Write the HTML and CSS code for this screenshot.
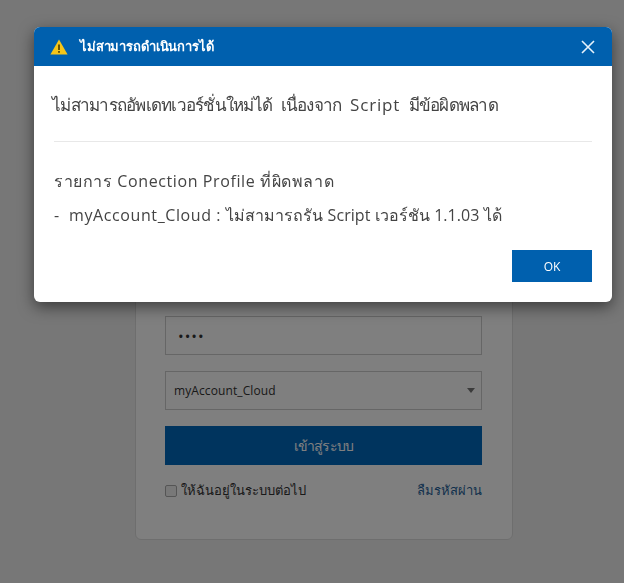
FILE: index.html
```html
<!DOCTYPE html>
<html lang="th">
<head>
  <meta charset="UTF-8">
  <meta name="viewport" content="width=device-width, initial-scale=1.0">
  <title>เข้าสู่ระบบ</title>
  <link rel="stylesheet" href="styles.css">
</head>
<body>
  <div class="login-card">
    <input class="field password-field" type="password" value="1234">
    <div class="field select-field">
      <span>myAccount_Cloud</span>
      <span class="select-arrow"></span>
    </div>
    <button class="login-btn">เข้าสู่ระบบ</button>
    <div class="login-options">
      <label class="remember"><span class="check-box"></span> ให้ฉันอยู่ในระบบต่อไป</label>
      <a class="forgot" href="#">ลืมรหัสผ่าน</a>
    </div>
  </div>

  <div class="backdrop"></div>

  <div class="dialog">
    <div class="dialog-header">
      <svg class="warn-icon" width="18" height="16" viewBox="0 0 18 16">
        <path d="M9 0.5 L17.6 15.5 H0.4 Z" fill="#f5c518"/>
        <rect x="8.1" y="5.5" width="1.8" height="5.5" fill="#5c4a00"/>
        <rect x="8.1" y="12" width="1.8" height="1.8" fill="#5c4a00"/>
      </svg>
      <span class="dialog-title">ไม่สามารถดำเนินการได้</span>
      <svg class="close-icon" width="14" height="14" viewBox="0 0 14 14">
        <path d="M1 1 L13 13 M13 1 L1 13" stroke="#e6f2fb" stroke-width="1.6" fill="none"/>
      </svg>
    </div>
    <div class="dialog-body">
      <p class="dialog-lead">ไม่สามารถอัพเดทเวอร์ชั่นใหม่ได้ เนื่องจาก <span class="lead-latin">Script</span> มีข้อผิดพลาด</p>
      <hr class="dialog-line">
      <p class="dialog-text">รายการ Conection Profile ที่ผิดพลาด</p>
      <p class="dialog-text"><span class="dialog-dash">-</span>myAccount_Cloud : <span class="dialog-tail">ไม่สามารถรัน Script เวอร์ชัน 1.1.03 ได้</span></p>
      <div class="dialog-actions">
        <button class="ok-btn">OK</button>
      </div>
    </div>
  </div>
</body>
</html>
```

FILE: styles.css
```css
* {
  box-sizing: border-box;
  margin: 0;
  padding: 0;
}

html, body {
  height: 100%;
}

body {
  background: #eeeeee;
  font-family: 'Open Sans', 'Noto Sans', sans-serif;
  overflow: hidden;
}

.login-card {
  width: 378px;
  height: 439px;
  margin: 101px 0 0 135px;
  padding: 214px 29px 0;
  background: white;
  border: 1px solid #dddddd;
  border-radius: 6px;
}

.field {
  display: block;
  width: 317px;
  height: 39px;
  padding: 0 8px;
  background: white;
  border: 1px solid #cccccc;
  font-family: inherit;
  font-size: 12px;
  color: #333333;
}

.password-field {
  padding-left: 12px;
  font-size: 15px;
  letter-spacing: 1px;
}

.select-field {
  display: flex;
  align-items: center;
  justify-content: space-between;
  margin-top: 16px;
  padding-right: 6px;
  letter-spacing: 0.1px;
}

.select-arrow {
  width: 0;
  height: 0;
  border-left: 4px solid transparent;
  border-right: 4px solid transparent;
  border-top: 5px solid #777777;
}

.login-btn {
  display: block;
  width: 317px;
  height: 39px;
  margin-top: 16px;
  background: #0068bd;
  color: white;
  border: none;
  font-family: inherit;
  font-size: 14px;
  letter-spacing: -0.9px;
}

.login-options {
  display: flex;
  justify-content: space-between;
  align-items: center;
  margin-top: 15px;
  width: 317px;
  font-size: 13px;
  color: #333333;
}

.remember {
  display: flex;
  align-items: center;
  gap: 4px;
}

.check-box {
  width: 12px;
  height: 12px;
  background: #f0f0f0;
  border: 1px solid #aaaaaa;
  border-radius: 2px;
}

.forgot {
  color: #1f5f99;
  text-decoration: none;
}

.backdrop {
  position: fixed;
  inset: 0;
  background: rgba(0, 0, 0, 0.5);
}

.dialog {
  position: absolute;
  left: 34px;
  top: 27px;
  width: 578px;
  height: 275px;
  background: white;
  border-radius: 6px;
  box-shadow: 0 5px 15px rgba(0, 0, 0, 0.5);
  overflow: hidden;
}

.dialog-header {
  display: flex;
  align-items: center;
  height: 39px;
  padding: 0 17px 0 16px;
  background: #0060ae;
}

.dialog-title {
  flex: 1;
  margin-left: 12px;
  color: white;
  font-size: 13px;
  font-weight: bold;
  letter-spacing: -0.15px;
}

.dialog-body {
  padding: 25px 20px 0;
}

.dialog-lead {
  margin-left: -2px;
  font-size: 17px;
  line-height: 28px;
  letter-spacing: -0.75px;
  word-spacing: 5px;
  color: #444444;
}

.lead-latin {
  letter-spacing: 0.8px;
}

.dialog-line {
  margin-top: 22px;
  border: none;
  border-top: 1px solid #e8e8e8;
}

.dialog-text {
  margin-top: 10px;
  font-size: 16px;
  line-height: 24px;
  letter-spacing: 0.6px;
  color: #444444;
}

.dialog-line + .dialog-text {
  margin-top: 27px;
}

.dialog-dash {
  display: inline-block;
  width: 15px;
}

.dialog-tail {
  letter-spacing: 0.05px;
}

.dialog-actions {
  display: flex;
  justify-content: flex-end;
  margin-top: 23px;
}

.ok-btn {
  width: 80px;
  height: 32px;
  background: #0060ae;
  color: white;
  border: none;
  font-family: inherit;
  font-size: 12px;
  font-weight: normal;
}
```
